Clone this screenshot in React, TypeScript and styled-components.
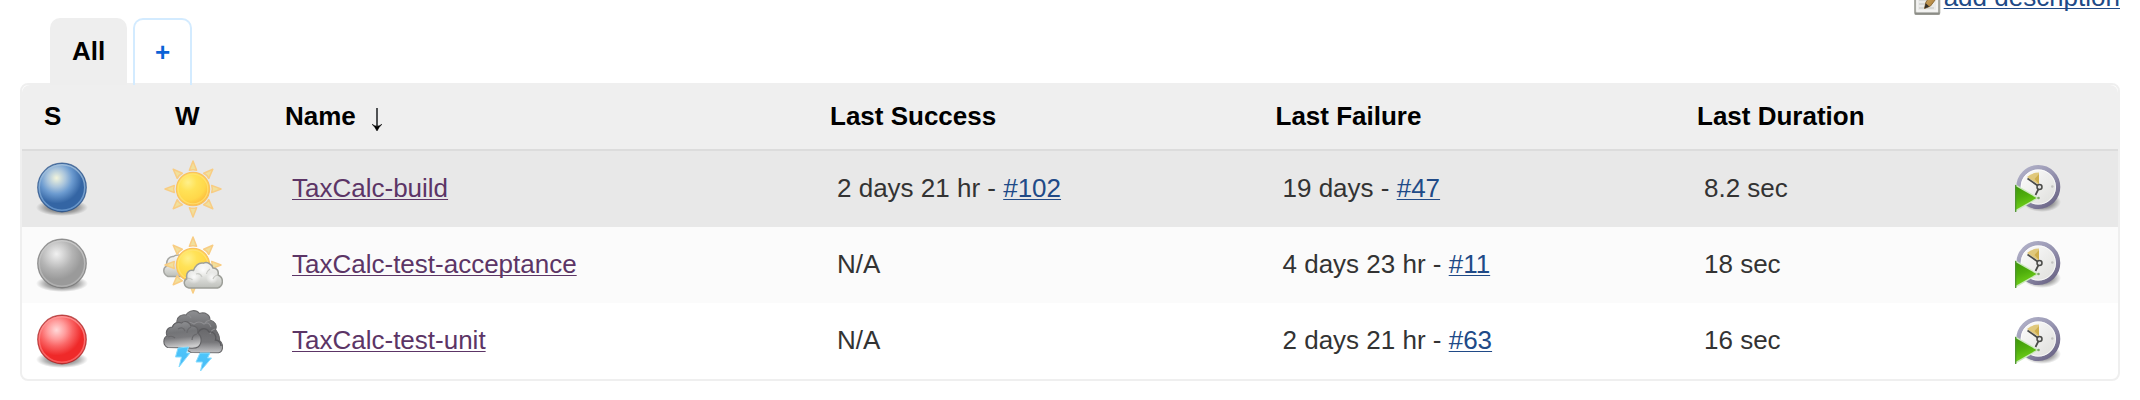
import React from "react";
import styled, { createGlobalStyle } from "styled-components";

const GlobalStyle = createGlobalStyle`
  * { box-sizing: border-box; }
  body { margin: 0; background: #fff; }
`;

const Page = styled.main`
  display: flex;
  flex-direction: column;
  width: 2140px;
  height: 400px;
  padding: 0 20px;
  overflow: hidden;
  background: #fff;
  color: #333;
  font: 26px/30px "Liberation Sans", Arial, Helvetica, sans-serif;
`;

const DescriptionBar = styled.div`
  display: flex;
  justify-content: flex-end;
  gap: 1px;
  height: 30px;
  margin-top: -18px;
`;

const Link = styled.a<{ $visited?: boolean }>`
  color: ${(p) => (p.$visited ? "#5c3566" : "#204a87")};
  text-decoration: underline;
  text-decoration-thickness: 1px;
  text-underline-offset: 2px;
  text-decoration-skip-ink: none;
`;

const Tabs = styled.nav`
  position: relative;
  z-index: 1;
  display: flex;
  gap: 6px;
  height: 67px;
  margin: 6px 0 -2px 30px;
`;

const Tab = styled.a<{ $active?: boolean }>`
  width: ${(p) => (p.$active ? 77 : 59)}px;
  padding-top: ${(p) => (p.$active ? 16 : 17)}px;
  border: 2px solid ${(p) => (p.$active ? "#eee" : "#d3ebff")};
  border-bottom: 0;
  border-radius: 10px 10px 0 0;
  background: ${(p) => (p.$active ? "#eee" : "transparent")};
  color: ${(p) => (p.$active ? "#000" : "#0b62d6")};
  font-weight: bold;
  text-align: center;
`;

const Panel = styled.section`
  height: 298px;
  border: 2px solid #efefef;
  border-radius: 8px;
  background: #fff;
`;

const GridRow = styled.div`
  display: grid;
  grid-template-columns: 131px 110px 545px 445.5px 421.5px 318px 1fr;
  padding-left: 22px;
`;

const HeadRow = styled(GridRow)`
  height: 66px;
  padding-top: 16px;
  border-bottom: 2px solid #dcdcdc;
  border-radius: 8px 8px 0 0;
  background: #efefef;
  color: #000;
  font-weight: bold;
`;

const SortLabel = styled.span`
  display: flex;
  align-items: flex-start;
  gap: 16px;
`;

const ArrowSvg = styled.svg`
  margin-top: 7px;
`;

const JobRow = styled(GridRow)<{ $tone: string }>`
  height: 76px;
  align-items: center;
  background: ${(p) => p.$tone};
`;

const Cell = styled.div`
  padding: 0 0 2px 7px;
  white-space: pre;
`;

const IconCell = styled.div<{ $shift: number; $drop?: number }>`
  display: flex;
  margin-left: ${(p) => p.$shift}px;
  padding-top: ${(p) => p.$drop ?? 0}px;
`;

type Stops = [string, string, string, string, string];
const ballTones: Record<string, Stops> = {
  blue: ["#f3f5dc", "#a9c4dc", "#6c9bd0", "#3465a4", "#275088"],
  grey: ["#f1f1f1", "#cecece", "#b4b4b4", "#9a9a9a", "#777"],
  red: ["#ffd9d9", "#ff9b9b", "#fa6666", "#ef2929", "#a82222"],
};

function Ball({ tone }: { tone: string }) {
  const [a, b, c, d, edge] = ballTones[tone];
  return (
    <svg width="56" height="60" viewBox="0 0 56 60">
      <defs>
        <radialGradient id={`ball-${tone}`} gradientUnits="userSpaceOnUse" cx="22.5" cy="18" r="29">
          <stop offset="0" stopColor={a} />
          <stop offset=".32" stopColor={b} />
          <stop offset=".55" stopColor={c} />
          <stop offset=".88" stopColor={d} />
          <stop offset="1" stopColor={d} />
        </radialGradient>
        <radialGradient id={`shade-${tone}`}>
          <stop offset="0" stopOpacity=".7" />
          <stop offset=".65" stopOpacity=".3" />
          <stop offset="1" stopOpacity="0" />
        </radialGradient>
        <linearGradient id={`rim-${tone}`} x2="0" y2="1">
          <stop offset="0" stopColor={b} />
          <stop offset="1" stopColor={c} />
        </linearGradient>
      </defs>
      <ellipse cx="28" cy="47.5" rx="26" ry="8.5" fill={`url(#shade-${tone})`} />
      <circle cx="28" cy="27.5" r="24.2" fill={`url(#ball-${tone})`} stroke={edge} strokeWidth="1.4" strokeOpacity=".75" />
      <circle cx="28" cy="27.5" r="22.8" fill="none" stroke={`url(#rim-${tone})`} strokeWidth="1.6" strokeOpacity=".8" />
    </svg>
  );
}

function SunShape({ id }: { id: string }) {
  return (
    <g>
      <defs>
        <radialGradient id={id} cx=".35" cy=".3" r=".75">
          <stop offset="0" stopColor="#fff08a" />
          <stop offset=".35" stopColor="#ffe257" />
          <stop offset=".7" stopColor="#ffd84a" />
          <stop offset="1" stopColor="#fdb53a" />
        </radialGradient>
      </defs>
      {[0, 45, 90, 135, 180, 225, 270, 315].map((a) => (
        <path key={a} d="M30 2 L33.6 11.3 Q30 10 26.4 11.3 Z" transform={`rotate(${a} 30 30)`} fill="#f1e09c" stroke="#f8cd84" strokeWidth="1.5" strokeLinejoin="round" />
      ))}
      <circle cx="30" cy="30" r="16.6" fill={`url(#${id})`} stroke="#f9c160" strokeWidth="1.2" />
      <circle cx="30" cy="30" r="14.9" fill="none" stroke="#ffe477" strokeOpacity=".7" strokeWidth="1.4" />
    </g>
  );
}

function Sunny() {
  return (
    <svg width="60" height="60" viewBox="0 0 60 60">
      <SunShape id="sun-clear" />
    </svg>
  );
}

function PartlyCloudy() {
  return (
    <svg width="60" height="60" viewBox="0 0 60 60">
      <defs>
        <linearGradient id="cloud" x2="0" y2="1">
          <stop offset="0" stopColor="#f6f6f4" />
          <stop offset=".55" stopColor="#e1e2df" />
          <stop offset="1" stopColor="#bdbfba" />
        </linearGradient>
        <radialGradient id="puff">
          <stop offset="0" stopColor="#fff" stopOpacity=".85" />
          <stop offset="1" stopColor="#fff" stopOpacity="0" />
        </radialGradient>
      </defs>
      <path d="M5 41.5C-.5 39-.3 33 3.7 31C2.8 25 6.5 21 10.5 21.5C14 18.5 20 20 21.5 24L21 41.5Z" fill="url(#cloud)" stroke="#a5a6a2" strokeWidth="1.5" />
      <SunShape id="sun-cloudy" />
      <path d="M26 53C20.5 52 19.8 45.5 24 43.5C22.5 38 26 34.5 30.5 35.5C32.5 30.5 36 27.5 40.5 28.2C44 26.5 49 29 50 33C54 33 56 36 55 40C61 42.5 60.8 51 54.5 53Z" fill="url(#cloud)" stroke="#9d9f99" strokeWidth="1.5" />
      <circle cx="40" cy="35" r="7" fill="url(#puff)" />
      <circle cx="31" cy="42" r="7" fill="url(#puff)" />
      <circle cx="49" cy="43" r="6" fill="url(#puff)" />
      <path d="M24.5 43.5Q27.5 43 29.5 45M33 39Q37 37.5 39 42M47 34Q44 36 43.5 39M54.5 40Q51 41 50 44" fill="none" stroke="#c9cac6" strokeWidth="1.2" />
    </svg>
  );
}

function Storm() {
  return (
    <svg width="60" height="64" viewBox="0 0 60 64">
      <defs>
        <linearGradient id="storm-back" x2="0" y2="1">
          <stop offset="0" stopColor="#8e8f92" />
          <stop offset=".45" stopColor="#69696c" />
          <stop offset=".75" stopColor="#77777a" />
          <stop offset="1" stopColor="#c4c4c6" />
        </linearGradient>
        <linearGradient id="storm-front" x2=".15" y2="1">
          <stop offset="0" stopColor="#929396" />
          <stop offset=".45" stopColor="#737477" />
          <stop offset=".65" stopColor="#7b7b7e" />
          <stop offset="1" stopColor="#cbcbcc" />
        </linearGradient>
        <linearGradient id="bolt" x2="0" y2="1">
          <stop offset="0" stopColor="#4cc6fb" />
          <stop offset="1" stopColor="#49baf5" />
        </linearGradient>
      </defs>
      <path d="M9 22C8 17 12 14 14 13.5C13 8 19 5 23 6C26 1 33 0 36.5 4.5C42 2.5 47.5 6 46.8 11C52 12 54.5 17 52.5 20.5C55 24 57 27 56.5 31.5C61 35 60.5 42.5 55.5 43.7L28 43.5L15 36Z" fill="url(#storm-back)" stroke="#6a6a6c" strokeWidth="1.1" />
      <path d="M14 14Q19 12 21 16Q25 11 31 15Q36 11 41 15Q46 12 48 18M24 6Q27 6 28 9M47 11Q43 12 42 14M52 20Q48 21 47 25" fill="none" stroke="#8d8d90" strokeWidth="1.1" />
      <path d="M35 24C37 19 43 18 46 23C51 22 54 27 52.5 31C56 31 58 34 58 37" fill="none" stroke="#5a5a5d" strokeWidth="1.3" />
      <path d="M4.5 38.5C-.5 36 0 29 4 27C2 22 5 18 9.5 18C10.5 14 15 12.5 18.5 14C22 11 27 13 28 17C33 16 36 20 34.5 24C39.5 27 39 35 35 38C33 39.5 29 39.3 26 39Z" fill="url(#storm-front)" stroke="#636366" strokeWidth="1.1" />
      <path d="M5 28Q9 26 12 29M15 20Q20 17 22 22M28 18Q24 20 24 24M34 25Q29 26 29 31" fill="none" stroke="#68686b" strokeWidth="1.1" />
      <path d="M15 39L25.5 38L23.5 44H27L16 58L18.5 48H12.5Z" fill="url(#bolt)" stroke="#87dcff" strokeWidth="1" />
      <path d="M37 44L47 44L44.5 49H48.5L37.5 62L39.5 53H33Z" fill="url(#bolt)" stroke="#87dcff" strokeWidth="1" />
    </svg>
  );
}

function ScheduleIcon() {
  return (
    <svg width="48" height="50" viewBox="0 0 48 50">
      <defs>
        <linearGradient id="clock-ring" x2=".8" y2="1">
          <stop offset="0" stopColor="#b4b4cb" />
          <stop offset=".5" stopColor="#9795b1" />
          <stop offset="1" stopColor="#6c6687" />
        </linearGradient>
        <linearGradient id="clock-face" x2="1" y2="1">
          <stop offset="0" stopColor="#fff" />
          <stop offset="1" stopColor="#dcdcd9" />
        </linearGradient>
        <linearGradient id="play" x2=".3" y2="1">
          <stop offset="0" stopColor="#3b9608" />
          <stop offset=".5" stopColor="#4fae0c" />
          <stop offset="1" stopColor="#72d31b" />
        </linearGradient>
        <radialGradient id="clock-shade">
          <stop offset=".6" stopOpacity=".35" />
          <stop offset="1" stopOpacity="0" />
        </radialGradient>
      </defs>
      <ellipse cx="27" cy="38" rx="19" ry="10" fill="url(#clock-shade)" />
      <circle cx="23.3" cy="23" r="19.8" fill="url(#clock-face)" stroke="url(#clock-ring)" strokeWidth="4.4" />
      <circle cx="23.3" cy="23" r="17.2" fill="none" stroke="#fff" strokeOpacity=".75" />
      <path d="M24 8.5V21L12 13Q17 8.5 24 8.5Z" fill="#e0c87c" />
      <path d="M19.5 15L24 20V10Z" fill="#cfae4d" />
      <path d="M12.5 14.5L22.5 21.5M23.5 25L20.5 31" stroke="#4b4c49" strokeWidth="1.7" />
      <circle cx="24.5" cy="23" r="2.5" fill="#e3e3e3" stroke="#4a4b48" strokeWidth="1.5" />
      <circle cx="37.3" cy="22.5" r="1.2" fill="#c2c2c0" />
      <path d="M0 20L24 34L0 48Z" fill="#cce8be" />
      <path d="M0 21.8L21.5 34L0 46.2Z" fill="url(#play)" />
      <circle cx="23.5" cy="34" r="1.3" fill="#7fa46c" />
      <path d="M.7 21V48" stroke="#4f9430" strokeWidth="1.3" />
    </svg>
  );
}

function NotepadIcon() {
  return (
    <svg width="30" height="34" viewBox="0 0 30 34">
      <defs>
        <linearGradient id="pencil" x2="1" y2="1">
          <stop offset="0" stopColor="#dfba70" />
          <stop offset="1" stopColor="#9b6a28" />
        </linearGradient>
      </defs>
      <rect x="2.2" y="4" width="24" height="28" rx="1" fill="#e6e6e3" stroke="#a5a69f" strokeWidth="2.2" />
      <rect x="4" y="6" width="20" height="23" fill="#ebebe9" stroke="#f6f6f5" strokeWidth="1.5" />
      <path d="M6 10H21M6 14H21M6 18H19M6 22H12M6 26H21" stroke="#d0d1ce" strokeWidth="1.5" />
      <path d="M2 31.5H26.5" stroke="#8b8c86" strokeWidth="2" />
      <path d="M11.5 26.5L13 20L22 8L27 11.5L17.5 24Z" fill="url(#pencil)" stroke="#8d6d3b" strokeWidth="1" />
      <path d="M11.5 26.5L12.7 21.2L16.3 24.6Z" fill="#34302b" />
    </svg>
  );
}

function SortArrow() {
  return (
    <ArrowSvg width="10" height="23" viewBox="0 0 10 23">
      <path d="M5 0V18" stroke="#505254" strokeWidth="2" />
      <path d="M0 16.2Q3 18.2 5 18.2Q7 18.2 10 16.2Q6.8 19 5 23Q3.2 19 0 16.2Z" fill="#000" stroke="#000" strokeWidth=".5" />
    </ArrowSvg>
  );
}

type Build = { age: string; number: string };
type Job = {
  name: string;
  tone: string;
  status: string;
  weather: React.ReactNode;
  success?: Build;
  failure?: Build;
  duration: string;
};

const jobs: Job[] = [
  {
    name: "TaxCalc-build",
    tone: "#e8e8e8",
    status: "blue",
    weather: <Sunny />,
    success: { age: "2 days 21 hr", number: "#102" },
    failure: { age: "19 days", number: "#47" },
    duration: "8.2 sec",
  },
  {
    name: "TaxCalc-test-acceptance",
    tone: "#fbfbfb",
    status: "grey",
    weather: <PartlyCloudy />,
    failure: { age: "4 days 23 hr", number: "#11" },
    duration: "18 sec",
  },
  {
    name: "TaxCalc-test-unit",
    tone: "transparent",
    status: "red",
    weather: <Storm />,
    failure: { age: "2 days 21 hr", number: "#63" },
    duration: "16 sec",
  },
];

function BuildCell({ build }: { build?: Build }) {
  return <Cell>{build ? <>{build.age} - <Link>{build.number}</Link></> : "N/A"}</Cell>;
}

export default function App() {
  return (
    <Page>
      <GlobalStyle />
      <DescriptionBar>
        <NotepadIcon />
        <Link>add description</Link>
      </DescriptionBar>
      <Tabs>
        <Tab $active>All</Tab>
        <Tab>+</Tab>
      </Tabs>
      <Panel>
        <HeadRow>
          <span>S</span>
          <span>W</span>
          <SortLabel>Name<SortArrow /></SortLabel>
          <span>Last Success</span>
          <span>Last Failure</span>
          <span>Last Duration</span>
        </HeadRow>
        {jobs.map((job) => (
          <JobRow key={job.name} $tone={job.tone}>
            <IconCell $shift={-10} $drop={2}><Ball tone={job.status} /></IconCell>
            <IconCell $shift={-12}>{job.weather}</IconCell>
            <Cell><Link $visited>{job.name}</Link></Cell>
            <BuildCell build={job.success} />
            <BuildCell build={job.failure} />
            <Cell>{job.duration}</Cell>
            <IconCell $shift={0}><ScheduleIcon /></IconCell>
          </JobRow>
        ))}
      </Panel>
    </Page>
  );
}
